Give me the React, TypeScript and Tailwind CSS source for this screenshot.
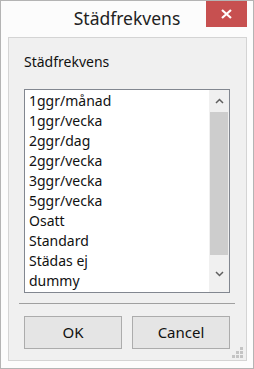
const items = [
  '1ggr/månad',
  '1ggr/vecka',
  '2ggr/dag',
  '2ggr/vecka',
  '3ggr/vecka',
  '5ggr/vecka',
  'Osatt',
  'Standard',
  'Städas ej',
  'dummy',
];

function Grip() {
  const dots = [
    [8, 0],
    [4, 4],
    [8, 4],
    [0, 8],
    [4, 8],
    [8, 8],
  ];
  return (
    <svg width="11" height="11" viewBox="0 0 11 11">
      {dots.map(([x, y]) => (
        <rect key={`${x}-${y}`} x={x} y={y} width="3" height="3" fill="#c4c4c4" />
      ))}
    </svg>
  );
}

export default function App() {
  return (
    <div
      className="w-[254px] h-[369px] border border-[#b4b4b4] bg-[#fcfcfc] flex flex-col text-black"
      style={{ fontFamily: '"Noto Sans", "Open Sans", sans-serif' }}
    >
      {/* title bar */}
      <div className="relative h-[36px] shrink-0">
        <div className="absolute left-0 right-0 top-[4px] text-center text-[17.5px] text-[#222]">Städfrekvens</div>
        <div className="absolute right-[6px] top-0 w-[41px] h-[26px] bg-[#c75050] flex items-center justify-center">
          <svg width="11" height="10" viewBox="0 0 11 10">
            <path d="M1 1 L10 9 M10 1 L1 9" stroke="white" strokeWidth="2.2" />
          </svg>
        </div>
      </div>

      {/* client area */}
      <div className="ml-[7px] mr-[6px] mb-[7px] flex-1 border border-[#d4d4d4] bg-[#f0f0f0] flex flex-col relative">
        <div className="ml-[15px] mt-[15px] text-[14px] leading-[18px] text-[#111]">Städfrekvens</div>

        <div className="ml-[15px] mt-[18px] w-[206px] h-[204px] border border-[#828790] bg-white flex">
          <div className="flex-1 pt-[1px] pl-[4px]">
            {items.map((it) => (
              <div key={it} className="h-[20px] leading-[20px] text-[14px] text-[#111] whitespace-nowrap">
                {it}
              </div>
            ))}
          </div>
          <div className="w-[20px] bg-[#f0f0f0] flex flex-col">
            <div className="h-[22px] flex items-center justify-center">
              <svg width="9" height="6" viewBox="0 0 9 6">
                <path d="M1 5 L4.5 1.5 L8 5" stroke="#606060" strokeWidth="1.5" fill="none" />
              </svg>
            </div>
            <div className="mx-[1px] h-[143px] bg-[#cdcdcd]" />
            <div className="flex-1 flex items-center justify-center">
              <svg width="9" height="6" viewBox="0 0 9 6">
                <path d="M1 1 L4.5 4.5 L8 1" stroke="#606060" strokeWidth="1.5" fill="none" />
              </svg>
            </div>
          </div>
        </div>

        <div className="ml-[10px] mt-[10px] w-[216px] h-[1px] bg-[#a0a0a0]" />

        <div className="ml-[15px] mt-[12px] flex gap-[10px]">
          <button className="w-[98px] h-[33px] border border-[#acacac] bg-[#e5e5e5] text-[15px] text-[#111]">OK</button>
          <button className="w-[98px] h-[33px] border border-[#acacac] bg-[#e5e5e5] text-[15px] text-[#111]">Cancel</button>
        </div>

        <div className="absolute right-[3px] bottom-[2px]">
          <Grip />
        </div>
      </div>
    </div>
  );
}
